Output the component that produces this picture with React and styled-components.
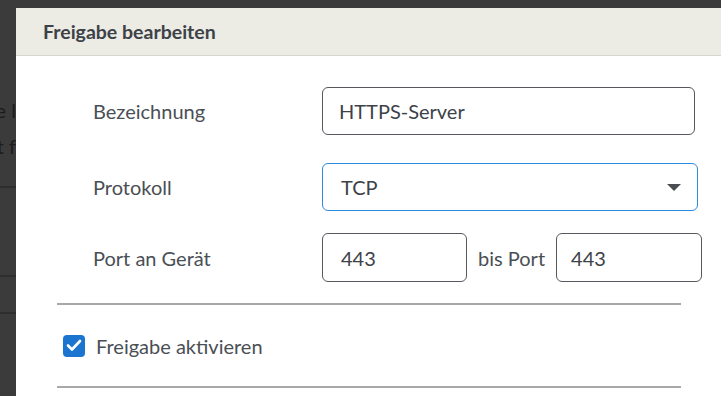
import React from "react";
import styled, { createGlobalStyle } from "styled-components";

const GlobalStyle = createGlobalStyle`
    html, body {
        margin:0;
        padding:0;
        width:721px;
        height:396px;
        overflow:hidden;
        background:#3b3b3b;
        font-family:"Lato", "Open Sans", sans-serif;
    }
`
const Backdrop = styled.div`
    width:721px;
    height:396px;
    background:#3b3b3b;
    display:flex;
    flex-direction:column;
`
const BgLine = styled.div`
    width:16px;
    height:${(p) => p.h}px;
    display:flex;
    align-items:center;
    justify-content:flex-end;
    overflow:hidden;
    white-space:nowrap;
    font-size:20px;
    color:#1c1c1c;
    border-bottom:${(p) => (p.rule ? "2px solid #2e2e2e" : "none")};
`
const Modal = styled.div`
    position:fixed;
    left:16px;
    top:8px;
    width:706px;
    height:420px;
    background:#fff;
    display:flex;
    flex-direction:column;
`
const Header = styled.div`
    height:47px;
    background:#ecebe4;
    border-bottom:1px solid #d5d5d2;
    display:flex;
    align-items:center;
    padding-left:27px;
    font-size:19.5px;
    font-weight:700;
    color:#3d4248;
`
const Body = styled.div`
    padding-top:31px;
    display:flex;
    flex-direction:column;
`
const Row = styled.div`
    display:flex;
    align-items:center;
    padding-left:77px;
    margin-bottom:${(p) => p.mb}px;
`
const Label = styled.div`
    width:229px;
    font-size:20px;
    color:#4a4f55;
`
const Field = styled.div`
    box-sizing:border-box;
    width:${(p) => p.w}px;
    height:${(p) => p.h || 48}px;
    border:1px solid ${(p) => (p.focus ? "#2b8ae2" : "#55585c")};
    border-radius:6px;
    display:flex;
    align-items:center;
    justify-content:space-between;
    padding:0 16px 0 ${(p) => p.pl || 16}px;
    font-size:20px;
    color:#3d4248;
`
const Arrow = styled.span`
    width:0;
    height:0;
    border-left:7px solid transparent;
    border-right:7px solid transparent;
    border-top:7px solid #4a4e53;
`
const Between = styled.span`
    margin:0 11px 0 11px;
    font-size:20px;
    color:#4a4f55;
`
const Divider = styled.div`
    margin:0 41px;
    height:2px;
    background:#a8a8a8;
`
const CheckRow = styled.div`
    display:flex;
    align-items:center;
    height:81px;
    padding-left:47px;
    font-size:20px;
    color:#4a4f55;
`
const Box = styled.span`
    width:22px;
    height:22px;
    border-radius:4px;
    background:#1b75d0;
    margin-right:11px;
    display:flex;
    align-items:center;
    justify-content:center;
`

const App = () => {
    return (
        <>
            <GlobalStyle />
            <Backdrop>
                <BgLine h={92} />
                <BgLine h={36}>Diese l</BgLine>
                <BgLine h={36}>Nicht f</BgLine>
                <BgLine h={22} rule />
                <BgLine h={87} rule />
                <BgLine h={35} rule />
            </Backdrop>
            <Modal>
                <Header>Freigabe bearbeiten</Header>
                <Body>
                    <Row mb={28}>
                        <Label>Bezeichnung</Label>
                        <Field w={373}>HTTPS-Server</Field>
                    </Row>
                    <Row mb={22}>
                        <Label>Protokoll</Label>
                        <Field w={376} pl={18} focus>
                            TCP
                            <Arrow />
                        </Field>
                    </Row>
                    <Row mb={21}>
                        <Label>Port an Gerät</Label>
                        <Field w={145} h={49} pl={18}>443</Field>
                        <Between>bis Port</Between>
                        <Field w={146} h={49} pl={14}>443</Field>
                    </Row>
                    <Divider />
                    <CheckRow>
                        <Box>
                            <svg width="16" height="13" viewBox="0 0 16 13">
                                <path d="M2 6.5 L6 10.5 L14 2" fill="none" stroke="#fff" strokeWidth="2.6" strokeLinecap="round" strokeLinejoin="round" />
                            </svg>
                        </Box>
                        Freigabe aktivieren
                    </CheckRow>
                    <Divider />
                </Body>
            </Modal>
        </>
    );
};

export default App;
